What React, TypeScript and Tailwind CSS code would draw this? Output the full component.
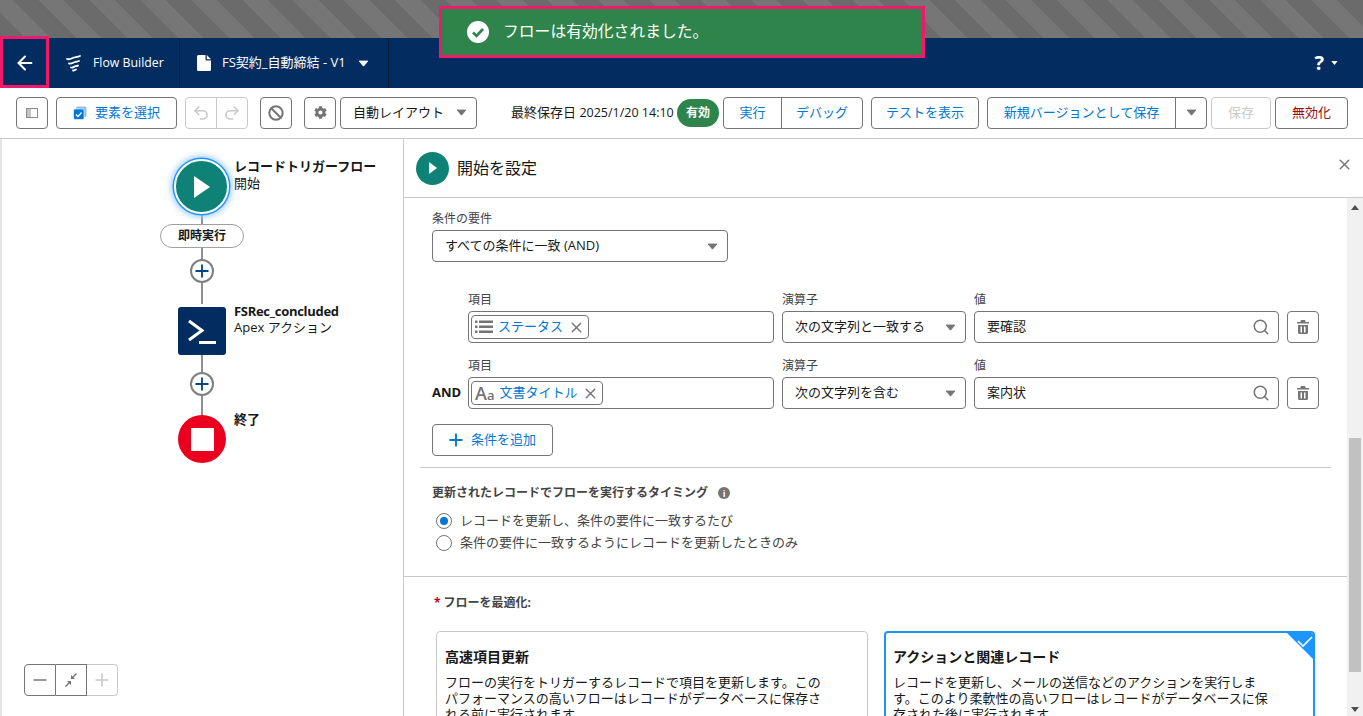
import { ArrowLeft, Ban, Redo2, Search, Undo2, X, Plus, Minus } from "lucide-react";
import { FaCog } from "react-icons/fa";
import type { ReactNode } from "react";

const font = "font-['Open_Sans','Noto_Sans_CJK_JP',sans-serif]";

function Caret({ className = "" }: { className?: string }) {
  return (
    <svg viewBox="0 0 12 8" className={`h-[7px] w-[11px] ${className}`}>
      <path d="M1 1.200h10L6 7z" fill="currentColor" stroke="currentColor" strokeLinejoin="round" />
    </svg>
  );
}

function ToolButton({ className = "", children }: { className?: string; children: ReactNode }) {
  return (
    <div className={`flex h-[32px] items-center justify-center rounded-[4px] border border-[#747474] bg-white ${className}`}>
      {children}
    </div>
  );
}

function FlowLogo() {
  return (
    <svg viewBox="0 0 18 18" className="h-[18px] w-[18px]" fill="none" stroke="white" strokeWidth="1.800" strokeLinecap="round">
      <path d="M2 5c3 1 5-1 7-1.500s4-.5 6-1.500" />
      <path d="M4 9.500c3 .5 4-1 6-1.500s3-.5 4-1" />
      <path d="M6 13.500c2 .5 3-1 4.500-1.300s2-.2 2.500-.7" />
      <path d="M8 16.500c1 .2 2-.5 3-1" />
    </svg>
  );
}

function Header() {
  return (
    <div className="flex h-[50px] shrink-0 items-stretch bg-[#032d60] text-white">
      <div className="flex w-[49px] items-center justify-center">
        <ArrowLeft size={22} strokeWidth={2.2} />
      </div>
      <div className="flex w-[131px] items-center gap-[10px] border-r border-[#0b1f38] pl-[16px] text-[12.300px]">
        <FlowLogo />
        <span>Flow Builder</span>
      </div>
      <div className="flex w-[209px] items-center border-r border-[#0b1f38] pl-[17px] text-[13px]">
        <svg viewBox="0 0 14 16" className="mr-[11px] h-[16px] w-[14px]">
          <path d="M1.500 0H8.500V4.500a1 1 0 0 0 1 1H14V14.500a1.500 1.500 0 0 1-1.500 1.500h-11A1.500 1.500 0 0 1 0 14.500v-13A1.500 1.500 0 0 1 1.500 0z" fill="white" />
          <path d="M9.800 0L14 4.300H9.800z" fill="white" />
        </svg>
        <span className="whitespace-nowrap">FS契約_自動締結 - V1</span>
        <Caret className="ml-[12px] text-white" />
      </div>
      <div className="ml-auto flex items-center gap-[7px] pr-[25px]">
        <span className="text-[20px] font-bold leading-none">?</span>
        <svg viewBox="0 0 8 5" className="h-[4px] w-[7px]"><path d="M0 0h8L4 5z" fill="white" /></svg>
      </div>
    </div>
  );
}

function Toolbar() {
  return (
    <div className="flex h-[51px] shrink-0 items-center border-b border-[#c9c9c9] bg-white pb-px pl-[16px] text-[13px] text-[#0176d3]">
      <ToolButton className="w-[32px]">
        <svg viewBox="0 0 12 10" className="h-[10px] w-[12px]">
          <rect x="0.500" y="0.500" width="11" height="9" fill="white" stroke="#8a8a8a" />
          <rect x="1" y="1" width="4" height="8" fill="#c4c4c4" />
        </svg>
      </ToolButton>
      <ToolButton className="ml-[8px] w-[121px] gap-[8px]">
        <svg viewBox="0 0 14 14" className="h-[14px] w-[14px]">
          <rect x="3" y="0.500" width="10.500" height="10.500" rx="1.500" fill="#8fc1ec" />
          <rect x="0.500" y="3" width="10.500" height="10.500" rx="1.500" fill="#0176d3" stroke="white" strokeWidth="0.600" />
          <path d="M3 8.500l2 2 3.500-4" fill="none" stroke="white" strokeWidth="1.300" />
        </svg>
        <span>要素を選択</span>
      </ToolButton>
      <div className="ml-[8px] flex h-[32px] w-[63px] rounded-[4px] border border-[#c9c9c9] text-[#c9c9c9]">
        <div className="flex flex-1 items-center justify-center border-r border-[#c9c9c9]"><Undo2 size={18} strokeWidth={2.2} /></div>
        <div className="flex flex-1 items-center justify-center"><Redo2 size={18} strokeWidth={2.2} /></div>
      </div>
      <ToolButton className="ml-[12px] w-[32px] text-[#747474]"><Ban size={16} strokeWidth={3} /></ToolButton>
      <ToolButton className="ml-[12px] w-[32px] text-[#747474]"><FaCog size={13} /></ToolButton>
      <div className="ml-[4px] flex h-[32px] w-[137px] items-center justify-between rounded-[4px] border border-[#747474] pl-[12px] pr-[9px] text-[#181818]">
        <span className="whitespace-nowrap">自動レイアウト</span>
        <Caret className="text-[#747474]" />
      </div>
      <span className="ml-[34px] w-[162px] whitespace-nowrap text-[#181818]">
        最終保存日 <span className="text-[12.500px]">2025/1/20 14:10</span>
      </span>
      <span className="ml-[4px] flex h-[28px] w-[42px] items-center justify-center rounded-full bg-[#2e844a] text-[12px] font-bold text-white">有効</span>
      <div className="ml-[4px] flex h-[32px] w-[140px] rounded-[4px] border border-[#747474]">
        <div className="flex w-[58px] items-center justify-center border-r border-[#747474]">実行</div>
        <div className="flex flex-1 items-center justify-center">デバッグ</div>
      </div>
      <ToolButton className="ml-[8px] w-[108px]">テストを表示</ToolButton>
      <div className="ml-[8px] flex h-[32px] w-[220px] rounded-[4px] border border-[#747474]">
        <div className="flex w-[188px] items-center justify-center border-r border-[#747474]">新規バージョンとして保存</div>
        <div className="flex flex-1 items-center justify-center"><Caret className="text-[#747474]" /></div>
      </div>
      <div className="ml-[4px] flex h-[32px] w-[60px] items-center justify-center rounded-[4px] border border-[#c9c9c9] text-[#c9c9c9]">保存</div>
      <ToolButton className="ml-[4px] w-[73px] text-[#9a0a12]">無効化</ToolButton>
    </div>
  );
}

function PlusNode({ top }: { top: number }) {
  return (
    <div
      className="absolute left-[188px] flex h-[24px] w-[24px] items-center justify-center rounded-full border-2 border-[#7f7f7f] bg-white text-[#014486]"
      style={{ top }}
    >
      <Plus size={20} strokeWidth={2.2} />
    </div>
  );
}

// canvas nodes sit at free positions, y values relative to the canvas top (139)
function Canvas() {
  return (
    <div className="relative w-[403px] shrink-0 overflow-hidden border-l-2 border-l-[#e5e5e5] bg-white text-[13px] text-[#181818]">
      <div className="absolute left-[199px] top-[70px] h-[95px] w-[2px] bg-[#8f8f8f]" />
      <div className="absolute left-[199px] top-[185px] h-[95px] w-[2px] bg-[#8f8f8f]" />
      <div className="absolute left-[172px] top-[20px] flex h-[55px] w-[55px] items-center justify-center rounded-full border-2 border-white bg-[#0f8277] shadow-[0_0_0_1.500px_#1b96ff,0_0_6px_3px_#9ccbf5]">
        <svg viewBox="0 0 16 22" className="ml-[1px] h-[24px] w-[16px]"><path d="M0 0l16 11L0 22z" fill="white" /></svg>
      </div>
      <div className="absolute left-[232px] top-[19px] whitespace-nowrap leading-[17px]">
        <div className="font-bold">レコードトリガーフロー</div>
        <div>開始</div>
      </div>
      <div className="absolute left-[158px] top-[85px] flex h-[24px] w-[84px] items-center justify-center rounded-full border border-[#a0a0a0] bg-white text-[12px] font-bold">即時実行</div>
      <PlusNode top={120} />
      <div className="absolute left-[176px] top-[168px] flex h-[48px] w-[48px] items-center justify-center rounded-[3px] bg-[#032d60]">
        <svg viewBox="0 0 28 25" className="h-[25px] w-[28px]" fill="none" stroke="white" strokeWidth="3">
          <path d="M1 2l13 9.500L1 21" />
          <path d="M11 23.500h17" />
        </svg>
      </div>
      <div className="absolute left-[232px] top-[164px] whitespace-nowrap leading-[16px]">
        <div className="font-bold tracking-[-0.300px]">FSRec_concluded</div>
        <div>Apex アクション</div>
      </div>
      <PlusNode top={233} />
      <div className="absolute left-[176px] top-[276px] flex h-[48px] w-[48px] items-center justify-center rounded-full bg-[#ea001e]">
        <div className="h-[23px] w-[23px] bg-white" />
      </div>
      <div className="absolute left-[232px] top-[272px] font-bold leading-[16px]">終了</div>
      <div className="absolute left-[22px] top-[525px] flex h-[32px] w-[94px]">
        <div className="flex w-[32px] items-center justify-center rounded-l-[4px] border border-[#747474] text-[#747474]"><Minus size={20} /></div>
        <div className="flex w-[31px] items-center justify-center border-y border-r border-[#747474] text-[#747474]">
          <svg viewBox="0 0 14 14" className="h-[14px] w-[14px]" fill="#747474">
            <path d="M13 1L9.500 4.500 11 6H7V2l1.500 1.500L12 0zM1 13l3.500-3.500L3 8h4v4l-1.500-1.500L2 14z" />
          </svg>
        </div>
        <div className="flex flex-1 items-center justify-center rounded-r-[4px] border-y border-r border-[#c9c9c9] text-[#c9c9c9]"><Plus size={20} /></div>
      </div>
    </div>
  );
}

function FieldLabel({ children }: { children: ReactNode }) {
  return <div className="mb-[4px] h-[14px] text-[12px] leading-[14px] text-[#444444]">{children}</div>;
}

function Box({ className = "", children }: { className?: string; children?: ReactNode }) {
  return <div className={`flex h-[32px] items-center rounded-[4px] border border-[#747474] bg-white ${className}`}>{children}</div>;
}

function ListIcon() {
  return (
    <svg viewBox="0 0 18 14" className="h-[14px] w-[18px]" fill="#747474">
      <rect x="0" y="0.500" width="2.500" height="2.500" /><rect x="4" y="0.500" width="14" height="2.500" />
      <rect x="0" y="5.500" width="2.500" height="2.500" /><rect x="4" y="5.500" width="14" height="2.500" />
      <rect x="0" y="10.500" width="2.500" height="2.500" /><rect x="4" y="10.500" width="14" height="2.500" />
    </svg>
  );
}

function TrashIcon() {
  return (
    <svg viewBox="0 0 12 14" className="h-[14px] w-[12px]" fill="#747474">
      <path d="M4.500 0h3a1 1 0 0 1 1 1v1H12v1.500H0V2h3.500V1a1 1 0 0 1 1-1z" />
      <path d="M1 5h10v7.500a1.500 1.500 0 0 1-1.500 1.500h-7A1.500 1.500 0 0 1 1 12.500zM3.500 6.500v6h1.500v-6zM7 6.500v6h1.500v-6z" fillRule="evenodd" />
    </svg>
  );
}

function ConditionRow({ and, icon, pill, op, value }: { and?: boolean; icon: ReactNode; pill: string; op: string; value: string }) {
  return (
    <div className="flex items-end">
      <div className="flex h-[32px] w-[36px] items-center text-[13px] font-bold text-[#181818]">{and ? "AND" : ""}</div>
      <div className="w-[306px]">
        <FieldLabel>項目</FieldLabel>
        <Box className="px-[2px]">
          <div className="flex h-[24px] items-center gap-[5px] rounded-[4px] border border-[#747474] pl-[3px] pr-[3px]">
            {icon}
            <span className="text-[13px] text-[#0176d3]">{pill}</span>
            <X size={17} className="text-[#747474]" strokeWidth={2} />
          </div>
        </Box>
      </div>
      <div className="ml-[8px] w-[184px]">
        <FieldLabel>演算子</FieldLabel>
        <Box className="justify-between pl-[12px] pr-[9px] text-[13px] text-[#181818]">
          <span>{op}</span>
          <Caret className="text-[#747474]" />
        </Box>
      </div>
      <div className="ml-[8px] w-[305px]">
        <FieldLabel>値</FieldLabel>
        <Box className="justify-between pl-[12px] pr-[8px] text-[13px] text-[#181818]">
          <span>{value}</span>
          <Search size={18} className="text-[#747474]" />
        </Box>
      </div>
      <Box className="ml-[8px] w-[32px] justify-center">
        <TrashIcon />
      </Box>
    </div>
  );
}

function Radio({ checked, label }: { checked?: boolean; label: string }) {
  return (
    <div className="flex h-[22px] items-center gap-[8px] text-[13px] text-[#444444]">
      <span className="flex h-[16px] w-[16px] items-center justify-center rounded-full border border-[#747474] bg-white">
        {checked && <span className="h-[8px] w-[8px] rounded-full bg-[#0176d3]" />}
      </span>
      {label}
    </div>
  );
}

function OptionCard({ selected, title, lines }: { selected?: boolean; title: string; lines: string[] }) {
  return (
    <div className={`relative h-[100px] overflow-hidden rounded-t-[4px] text-[#181818] ${selected ? "border-2 border-[#1b96ff] pl-[7px]" : "border border-[#c9c9c9] pl-[8px]"}`}>
      {selected && (
        <svg viewBox="0 0 30 30" className="absolute -right-[2px] -top-[2px] h-[30px] w-[30px]">
          <path d="M0 0h30v30z" fill="#1b96ff" />
          <path d="M13 10l5 5 9-9" fill="none" stroke="white" strokeWidth="1.600" />
        </svg>
      )}
      <div className={`${selected ? "mt-[15px]" : "mt-[16px]"} text-[14px] font-bold leading-[18px]`}>{title}</div>
      <div className="mt-[8px] text-[13px] leading-[16px]">
        {lines.map((l) => <div key={l} className="whitespace-nowrap">{l}</div>)}
      </div>
    </div>
  );
}

function Panel() {
  return (
    <div className="flex min-w-0 flex-1 flex-col border-l border-[#c9c9c9] bg-white">
      <div className="flex h-[59px] shrink-0 items-center border-b border-[#c9c9c9] pl-[12px] pr-[10px]">
        <div className="flex h-[33px] w-[33px] items-center justify-center rounded-full bg-[#0f8277]">
          <svg viewBox="0 0 8 12" className="ml-[1px] h-[12px] w-[8px]"><path d="M0 0l8 6-8 6z" fill="white" /></svg>
        </div>
        <span className="ml-[8px] text-[16px] text-[#181818]">開始を設定</span>
        <X size={17} className="ml-auto -mt-[8px] text-[#747474]" strokeWidth={2} />
      </div>
      <div className="flex min-h-0 flex-1">
        <div className="min-w-0 flex-1 overflow-hidden">
          <div className="px-[28px] pt-[14px]">
            <FieldLabel>条件の要件</FieldLabel>
            <Box className="w-[296px] justify-between pl-[12px] pr-[9px] text-[13px] text-[#181818]">
              <span>すべての条件に一致 (AND)</span>
              <Caret className="text-[#747474]" />
            </Box>
            <div className="mt-[31px] flex flex-col gap-[16px]">
              <ConditionRow icon={<ListIcon />} pill="ステータス" op="次の文字列と一致する" value="要確認" />
              <ConditionRow
                and
                icon={
                  <span className="flex items-end font-semibold text-[#747474]">
                    <span className="text-[18px] leading-[18px]">A</span>
                    <span className="text-[13px] leading-[13px]">a</span>
                  </span>
                }
                pill="文書タイトル"
                op="次の文字列を含む"
                value="案内状"
              />
            </div>
            <Box className="mt-[15px] w-[121px] gap-[5px] pl-[13px] text-[13px] text-[#0176d3]">
              <Plus size={20} strokeWidth={2.2} />
              条件を追加
            </Box>
          </div>
          <div className="mx-[16px] mt-[11px] border-t border-[#c9c9c9]" />
          <div className="px-[28px] pt-[17px]">
            <div className="flex items-center gap-[10px] text-[12px] font-bold leading-[16px] text-[#444444]">
              更新されたレコードでフローを実行するタイミング
              <span className="flex h-[12px] w-[12px] items-center justify-center rounded-full bg-[#747474] text-[9px] font-bold leading-none text-white">i</span>
            </div>
            <div className="mt-[9px] pl-[4px]">
              <Radio checked label="レコードを更新し、条件の要件に一致するたび" />
              <Radio label="条件の要件に一致するようにレコードを更新したときのみ" />
            </div>
          </div>
          <div className="mt-[22px] border-t border-[#c9c9c9]" />
          <div className="px-[32px] pt-[18px]">
            <div className="-ml-[2px] text-[12px] font-bold leading-[16px] text-[#444444]">
              <span className="mr-[3px] text-[#ba0517]">*</span>フローを最適化:
            </div>
            <div className="mt-[20px] grid grid-cols-[432px_1fr] gap-[16px]">
              <OptionCard
                title="高速項目更新"
                lines={[
                  "フローの実行をトリガーするレコードで項目を更新します。この",
                  "パフォーマンスの高いフローはレコードがデータベースに保存さ",
                  "れる前に実行されます。",
                ]}
              />
              <OptionCard
                selected
                title="アクションと関連レコード"
                lines={[
                  "レコードを更新し、メールの送信などのアクションを実行しま",
                  "す。このより柔軟性の高いフローはレコードがデータベースに保",
                  "存された後に実行されます。",
                ]}
              />
            </div>
          </div>
        </div>
        <div className="relative w-[16px] shrink-0 bg-[#f1f1f1]">
          <svg viewBox="0 0 10 6" className="absolute left-[4px] top-[7px] h-[5px] w-[8px]"><path d="M0 6h10L5 0z" fill="#505050" /></svg>
          <div className="absolute left-[2px] right-[2px] top-[240px] h-[234px] bg-[#c1c1c1]" />
          <svg viewBox="0 0 10 6" className="absolute bottom-[4px] left-[4px] h-[5px] w-[8px]"><path d="M0 0h10L5 6z" fill="#505050" /></svg>
        </div>
      </div>
    </div>
  );
}

export default function App() {
  return (
    <div className={`relative flex h-[716px] w-[1363px] flex-col overflow-hidden bg-white ${font}`}>
      <div className="h-[38px] shrink-0 bg-[repeating-linear-gradient(45deg,#6b6b6b_0,#6b6b6b_18px,#767676_18px,#767676_36px)]" />
      <Header />
      <Toolbar />
      <div className="flex min-h-0 flex-1">
        <Canvas />
        <Panel />
      </div>
      {/* highlight frames and toast over the header */}
      <div className="absolute left-0 top-[36px] h-[52px] w-[49px] border-[3px] border-[#f0196a]" />
      <div className="absolute left-[439px] top-[6px] flex h-[52px] w-[486px] items-center border-[3px] border-[#f0196a] bg-[#2e844a] pl-[25px] text-[15.800px] text-white">
        <svg viewBox="0 0 22 22" className="mr-[14px] h-[22px] w-[22px]">
          <circle cx="11" cy="11" r="11" fill="white" />
          <path d="M6 11.500l3.500 3.500L16 8" fill="none" stroke="#2e844a" strokeWidth="2.600" />
        </svg>
        フローは有効化されました。
      </div>
    </div>
  );
}
